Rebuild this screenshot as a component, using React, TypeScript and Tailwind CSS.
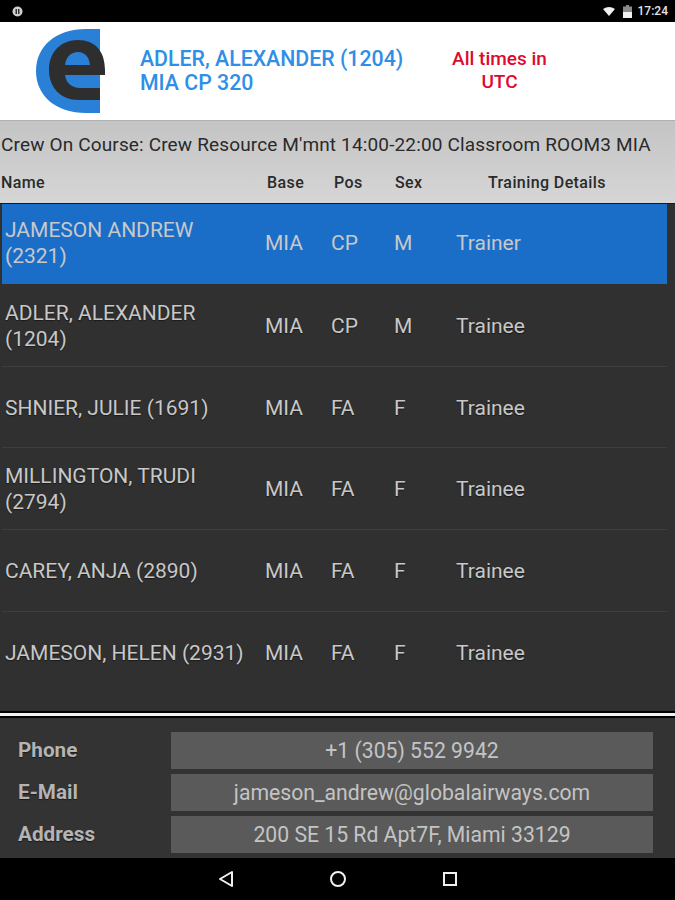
import React from 'react';

const crew = [
  { name: 'JAMESON ANDREW (2321)', pos: 'CP', sex: 'M', role: 'Trainer', selected: true },
  { name: 'ADLER, ALEXANDER (1204)', pos: 'CP', sex: 'M', role: 'Trainee' },
  { name: 'SHNIER, JULIE (1691)', pos: 'FA', sex: 'F', role: 'Trainee' },
  { name: 'MILLINGTON, TRUDI (2794)', pos: 'FA', sex: 'F', role: 'Trainee' },
  { name: 'CAREY, ANJA (2890)', pos: 'FA', sex: 'F', role: 'Trainee' },
  { name: 'JAMESON, HELEN (2931)', pos: 'FA', sex: 'F', role: 'Trainee' },
];

const details = [
  { label: 'Phone', value: '+1 (305) 552 9942' },
  { label: 'E-Mail', value: 'jameson_andrew@globalairways.com' },
  { label: 'Address', value: '200 SE 15 Rd Apt7F, Miami 33129' },
];

const Logo = () => (
  <svg width="70" height="86" viewBox="0 0 70 86" className="shrink-0">
    <path d="M64 1H50C20 1 0 18 0 43C0 68 20 85 50 85H64Z" fill="#2a7fd6" />
    <path
      fillRule="evenodd"
      fill="#2e2e2e"
      d="M64 72H43C24 72 13 59 13 42C13 24 25 12 42 12C59 12 69 23 69 42V47H29C30 55 36 60 44 60H64ZM29 37H54C53 29 49 24 42 24C35 24 30 29 29 37Z"
    />
  </svg>
);

const App = () => {
  return (
    <div className="w-[675px] h-[900px] flex flex-col overflow-hidden bg-black font-['Roboto',sans-serif]">
      {/* Status bar */}
      <div className="h-[22px] shrink-0 bg-black flex items-center pl-[12px] pr-[7px] text-[#e4e4e4]">
        <svg width="11" height="11" viewBox="0 0 11 11">
          <circle cx="5.5" cy="5.5" r="5" fill="#d0d0d0" />
          <rect x="3.5" y="3" width="1.5" height="5" fill="#333" />
          <rect x="6" y="3" width="1.5" height="5" fill="#333" />
        </svg>
        <svg width="12" height="9" viewBox="0 0 12 9" className="ml-auto">
          <path d="M0 2Q6 -2 12 2L6 9Z" fill="#f0f0f0" />
        </svg>
        <svg width="9" height="13" viewBox="0 0 9 13" className="ml-[8px]">
          <path d="M3 0H6V1.5H9V13H0V1.5H3Z" fill="#8a8a8a" />
          <rect y="7" width="9" height="6" fill="#f0f0f0" />
        </svg>
        <span className="ml-[6px] text-[12px] font-medium leading-none">17:24</span>
      </div>

      {/* Header */}
      <div className="h-[98px] shrink-0 bg-white flex items-center pl-[36px]">
        <Logo />
        <div className="ml-[34px] w-[296px] text-[21.3px] font-medium leading-[24.5px] text-[#2f8fe6]">
          <div>ADLER, ALEXANDER (1204)</div>
          <div>MIA CP 320</div>
        </div>
        <div className="w-[127px] pb-[3px] text-center text-[19px] font-medium leading-[23px] text-[#dc0a2d]">
          All times in UTC
        </div>
      </div>

      {/* Course header */}
      <div className="h-[83px] shrink-0 bg-gradient-to-b from-[#c4c4c4] to-[#d6d6d6] border-t border-[#b0b0b0] text-[#2a2a2a]">
        <div className="pl-[1px] pt-[13px] text-[19px] leading-[22px] whitespace-nowrap tracking-[0.15px]">
          Crew On Course: Crew Resource M'mnt 14:00-22:00 Classroom ROOM3 MIA
        </div>
        <div className="flex pt-[18px] text-[16px] font-medium leading-[18px] tracking-[0.4px]">
          <div className="w-[267px] pl-[1px]">Name</div>
          <div className="w-[67px]">Base</div>
          <div className="w-[61px]">Pos</div>
          <div className="w-[93px]">Sex</div>
          <div>Training Details</div>
        </div>
      </div>

      {/* Crew list */}
      <div className="h-[508px] shrink-0 bg-[#303030] border-t border-[#1a1a1a] pl-[2px] pr-[8px] text-[21px] leading-[26px] text-[#c8c8c8]">
        {crew.map((c) => (
          <div
            key={c.name}
            className={`flex items-center ${c.selected ? 'h-[80px] mb-[1px] pb-[2px] bg-[#1b6ec8]' : 'h-[81.7px] pt-[1px] border-b border-[#3e3e3e] last:border-b-0 [text-shadow:0_1px_1px_#1a1a1a]'}`}
          >
            <div className="w-[263px] pl-[3px] pr-[15px]">{c.name}</div>
            <div className="w-[66px]">MIA</div>
            <div className="w-[63px]">{c.pos}</div>
            <div className="w-[62px]">{c.sex}</div>
            <div>{c.role}</div>
          </div>
        ))}
      </div>

      {/* Separator */}
      <div className="h-[7px] shrink-0 bg-black flex items-center">
        <div className="w-full h-[3px] bg-[#f2f2f2]" />
      </div>

      {/* Contact details */}
      <div className="h-[140px] shrink-0 bg-[#333333] pt-[14px] pl-[18px] pr-[22px] flex flex-col gap-[5px]">
        {details.map((d) => (
          <div key={d.label} className="flex h-[37px] items-center">
            <div className="w-[153px] pt-[1px] text-[20.7px] font-bold text-[#b4b4b4] [text-shadow:0_1px_1px_#1a1a1a]">{d.label}</div>
            <div className="flex-1 h-full flex items-center justify-center bg-[#5a5a5a] text-[21.2px] text-[#c4c4c4]">
              {d.value}
            </div>
          </div>
        ))}
      </div>

      {/* Navigation bar */}
      <div className="flex-1 bg-black flex items-center justify-center gap-[95px] text-[#f0f0f0]">
        <svg width="16" height="18" viewBox="0 0 16 18" fill="none" stroke="currentColor" strokeWidth="2">
          <path d="M14 2V16L2 9Z" strokeLinejoin="round" />
        </svg>
        <svg width="18" height="18" viewBox="0 0 18 18" fill="none" stroke="currentColor" strokeWidth="2">
          <circle cx="9" cy="9" r="7" />
        </svg>
        <svg width="16" height="16" viewBox="0 0 16 16" fill="none" stroke="currentColor" strokeWidth="2">
          <rect x="2" y="2" width="12" height="12" />
        </svg>
      </div>
    </div>
  );
};

export default App;
